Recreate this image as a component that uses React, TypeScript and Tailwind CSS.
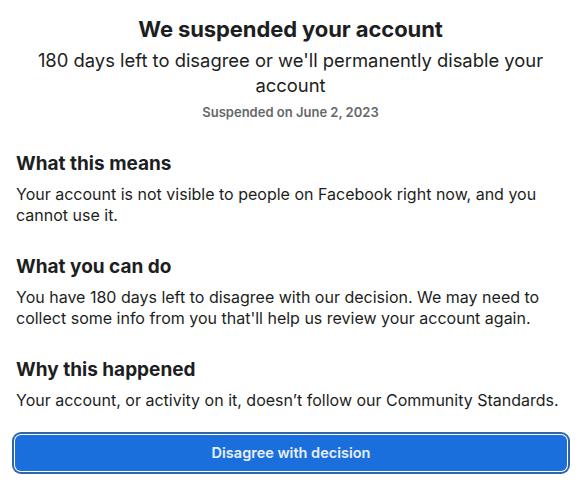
export default function App() {
  return (
    <div className="w-[581px] h-[488px] bg-white text-[#1c1e21] font-['Inter',sans-serif] overflow-hidden">
      <div className="px-4 pt-[14px] flex flex-col">
        {/* Header */}
        <div className="flex flex-col items-center text-center">
          <h1 className="text-[22px] font-bold leading-[30px] tracking-[-0.1px]">We suspended your account</h1>
          <p className="text-[18.4px] leading-[25px] mt-[4px] px-5">
            180 days left to disagree or we'll permanently disable your account
          </p>
          <span className="text-[13px] leading-[18px] font-semibold text-[#65676b] mt-[5px]">Suspended on June 2, 2023</span>
        </div>

        {/* Sections */}
        <div className="mt-[30px] flex flex-col gap-[28px]">
          <section>
            <h2 className="text-[19px] font-bold leading-[26px]">What this means</h2>
            <p className="text-[16px] leading-[21px] mt-[7px]">
              Your account is not visible to people on Facebook right now, and you cannot use it.
            </p>
          </section>
          <section>
            <h2 className="text-[19px] font-bold leading-[26px]">What you can do</h2>
            <p className="text-[16px] leading-[21px] mt-[7px]">
              You have 180 days left to disagree with our decision. We may need to collect some info from you that'll help us review your account again.
            </p>
          </section>
          <section>
            <h2 className="text-[19px] font-bold leading-[26px]">Why this happened</h2>
            <p className="text-[16px] leading-[21px] mt-[7px]">
              Your account, or activity on it, doesn’t follow our Community Standards.
            </p>
          </section>
        </div>

        <button className="mt-[24px] ml-[-1px] w-[552px] h-[36px] rounded-[6px] bg-[#1b6fdc] text-[#e8f0fc] text-[14.5px] font-semibold ring-2 ring-[#2f66a8] ring-offset-1 ring-offset-white">
          Disagree with decision
        </button>
      </div>
    </div>
  );
}
